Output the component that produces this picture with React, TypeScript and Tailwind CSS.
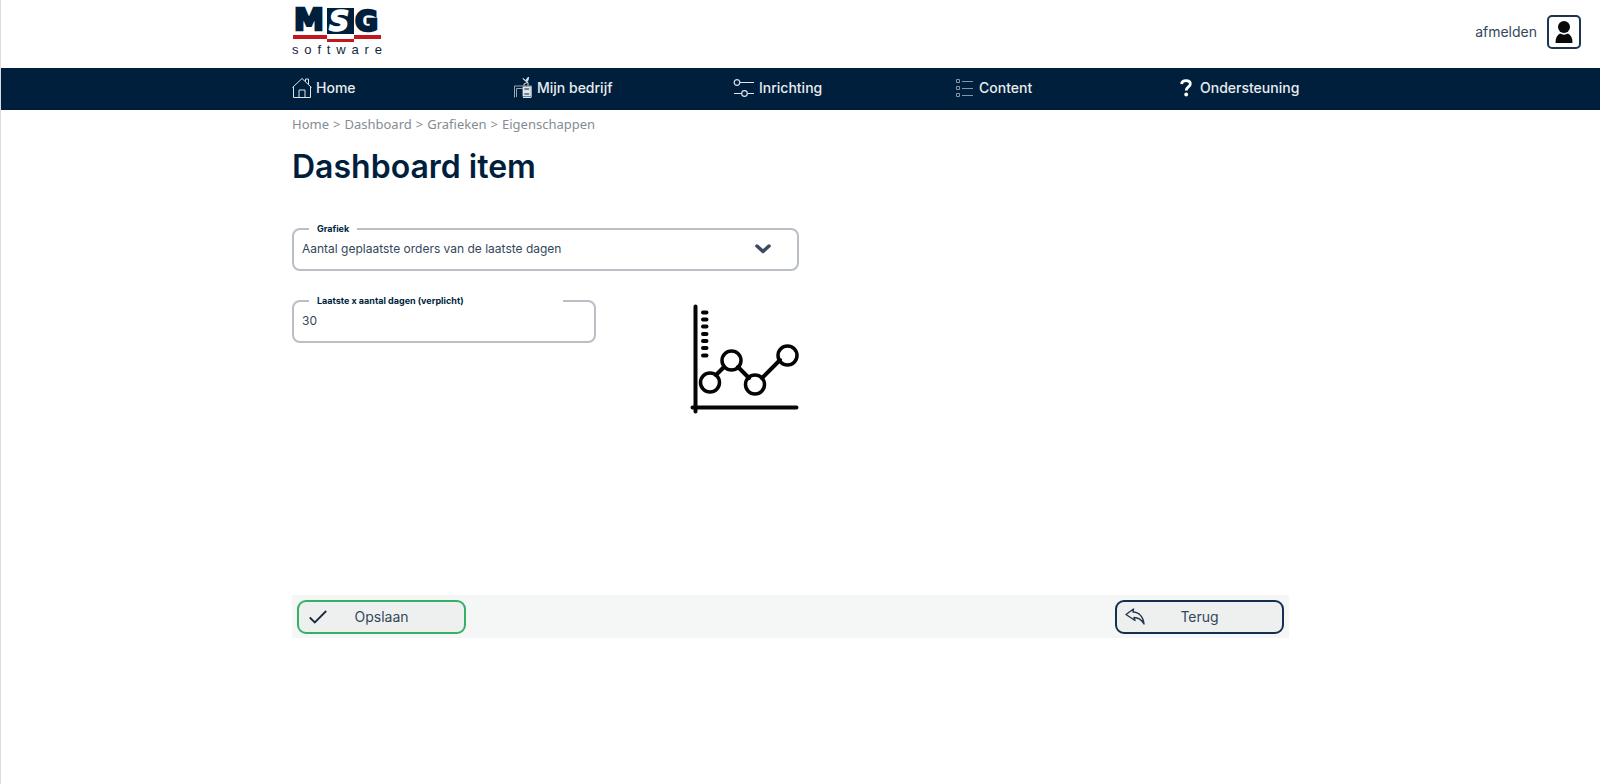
import { useState } from 'react';
import type { ReactNode } from 'react';

const NAV_ITEMS: Array<{ label: string; icon: ReactNode; gap: string }> = [
  { label: 'Home', icon: <HomeIcon />, gap: 'gap-1' },
  { label: 'Mijn bedrijf', icon: <DeskIcon />, gap: 'gap-1' },
  { label: 'Inrichting', icon: <SlidersIcon />, gap: 'gap-1' },
  { label: 'Content', icon: <ListIcon />, gap: 'gap-1.5' },
  { label: 'Ondersteuning', icon: <QuestionIcon />, gap: 'gap-2' },
];

const CRUMBS = ['Home', 'Dashboard', 'Grafieken', 'Eigenschappen'];

function Logo() {
  return (
    <span className="block w-[90px]">
      <svg width="90" height="44" viewBox="0 0 90 44" role="img" aria-label="MSG">
        <rect x="35" y="8" width="27" height="26" fill="#001f3d" />
        <g fontFamily="'DejaVu Sans', sans-serif" fontWeight="bold" fontSize="28" strokeWidth="2.500">
          <text x="2" y="30" fill="#001f3d" stroke="#001f3d" fontSize="30">M</text>
          <text x="37" y="31" fill="#fff" stroke="#fff" strokeWidth="1.500" fontStyle="italic">S</text>
          <text x="63" y="31" fill="#001f3d" stroke="#001f3d">G</text>
        </g>
        <path d="M1 35h34v4H1zM62 35h27v4H62zM35 39h27v3H35z" fill="#c4161c" />
      </svg>
      <span className="flex justify-between font-['Liberation_Sans',sans-serif] text-[13px] leading-3 font-medium text-[#12253c]">
        {Array.from('software').map((letter, i) => (
          <span key={i}>{letter}</span>
        ))}
      </span>
    </span>
  );
}

function HomeIcon() {
  return (
    <svg width="20" height="22" viewBox="0 0 20 22" fill="none" stroke="#dfe5ea" strokeWidth="1">
      <path d="M0.500 10.500 10 1.500l9.500 9M1.500 10v10.500h17V10M7 20.500v-7.500h6v7.500M13.500 4.500v-2.500h3v5" />
    </svg>
  );
}

function DeskIcon() {
  return (
    <svg width="20" height="22" viewBox="0 0 20 22" fill="none" stroke="#dfe5ea" strokeWidth="1">
      <path d="M1.500 20.500v-11.500h17v11.500M3.500 20v-8.500h6" stroke="#9aa7b4" />
      <path d="M11 8.500V7l3-1.500h1V8.500M14.500 5.500l-1-2M10 20.500h8" />
      <path d="M10 1.500l2.500 2 3-3.500-.5 3.500-2 1z" fill="#dfe5ea" />
      <path d="M10.500 10.500h6.500v3h-6.500zM10.500 15.500h6.500v3h-6.500z" strokeWidth="1.800" />
    </svg>
  );
}

function SlidersIcon() {
  return (
    <svg width="22" height="20" viewBox="0 0 22 20" fill="none" stroke="#dfe5ea" strokeWidth="1.200">
      <circle cx="4" cy="4.500" r="2.800" />
      <circle cx="11.500" cy="15.500" r="2.800" />
      <path d="M7 4.500h14M1 15.500h7.500M14.500 15.500H21" />
    </svg>
  );
}

function ListIcon() {
  return (
    <svg width="18" height="20" viewBox="0 0 18 20" fill="none" stroke="#8794a3" strokeWidth="1">
      <path d="M1.500 1.500h3v3h-3zM1.500 8.500h3v3h-3zM1.500 15.500h3v3h-3zM7 3.500h11M7 10.500h11M7 17.500h11" />
    </svg>
  );
}

function QuestionIcon() {
  return (
    <svg width="12" height="18" viewBox="0 0 12 18" fill="none" stroke="#fff" strokeWidth="2.800">
      <path d="M1.500 5C1.800 2.600 3.500 1.700 6 1.700c2.600 0 4.300 1.200 4.300 3.200 0 3-4.100 2.900-4.100 6.600" />
      <circle cx="6.200" cy="15.500" r="1.900" fill="#fff" stroke="none" />
    </svg>
  );
}

function UserIcon() {
  return (
    <svg width="18" height="24" viewBox="0 0 18 24" fill="#0a0a0a">
      <circle cx="9" cy="7" r="6" />
      <path d="M0.500 23c0-5 1.500-8 4.500-9.500 2.500 1.500 5.500 1.500 8 0 3 1.500 4.500 4.500 4.500 9.500z" />
    </svg>
  );
}

function LineChartIcon() {
  return (
    <svg width="110" height="110" viewBox="0 0 110 110" fill="none" stroke="#050505" strokeLinecap="round">
      <path d="M5.500 2.500v105M2.500 103.500h104" strokeWidth="4" />
      <path
        d="M13 8.500h3.500M13 15.500h3.500M13 22.500h3.500M13 30h3.500M13 37h3.500M13 44h3.500M13 51.500h3.500"
        strokeWidth="4"
      />
      <path d="M26 71l8-8M48 63l11 11M72 74l18-18" strokeWidth="4" />
      <g strokeWidth="3.500">
        <circle cx="20" cy="78.500" r="9.500" />
        <circle cx="41.500" cy="56.500" r="9.500" />
        <circle cx="65" cy="80.500" r="9.500" />
        <circle cx="97.500" cy="51.500" r="9.500" />
      </g>
    </svg>
  );
}

export default function App() {
  const [chart, setChart] = useState('orders');
  const [days, setDays] = useState('30');

  return (
    <div className="min-h-screen border-l border-[#dcdcdc] bg-white font-['Inter',sans-serif] text-[#34475a]">
      <header className="flex h-[68px] items-start justify-between pr-[19px] pl-[291px]">
        <a href="#home">
          <Logo />
        </a>
        <a href="#afmelden" className="mt-[15px] flex items-center gap-2.5 text-sm">
          afmelden
          <span className="flex size-[34px] items-center justify-center rounded-[5px] border-2 border-[#1c3450]">
            <UserIcon />
          </span>
        </a>
      </header>

      <nav className="h-[42px] bg-[#001f3d] pr-5">
        <ul className="mx-auto grid h-full max-w-[997px] grid-cols-[221px_220px_222px_225px_auto] items-center pb-0.5">
          {NAV_ITEMS.map((item) => (
            <li key={item.label}>
              <a
                href="#"
                className={`flex items-center text-sm font-medium whitespace-nowrap text-[#e8ecef] ${item.gap}`}
              >
                {item.icon}
                {item.label}
              </a>
            </li>
          ))}
        </ul>
      </nav>

      <div className="pr-5">
        <main className="mx-auto max-w-[997px]">
          <ol className="flex pt-[5px] font-['Noto_Sans',sans-serif] text-[13px] leading-[18px] text-[#858c93]">
            {CRUMBS.map((crumb, i) => (
              <li key={crumb}>
                {i > 0 && <span className="px-1">&gt;</span>}
                <a href="#">{crumb}</a>
              </li>
            ))}
          </ol>
          <h1 className="mt-3.5 text-[32px] leading-10 font-semibold text-[#001f3d]">Dashboard item</h1>

          <form>
            <fieldset className="mt-9 h-12 w-[507px] rounded-lg border-2 border-[#b9bfc4]">
              <legend className="ml-[15px] px-2 text-[9px] leading-3 font-bold text-[#001f3d]">
                <label htmlFor="grafiek">Grafiek</label>
              </legend>
              <div className="grid items-center">
                <select
                  id="grafiek"
                  value={chart}
                  onChange={(e) => setChart(e.target.value)}
                  className="col-start-1 row-start-1 h-7 appearance-none bg-transparent px-2 text-xs outline-none"
                >
                  <option value="orders">Aantal geplaatste orders van de laatste dagen</option>
                </select>
                <svg
                  className="pointer-events-none col-start-1 row-start-1 mr-[26px] justify-self-end"
                  width="16"
                  height="10"
                  viewBox="0 0 16 10"
                  fill="none"
                  stroke="#3c4c60"
                  strokeWidth="3.500"
                  strokeLinecap="round"
                  strokeLinejoin="round"
                >
                  <path d="m2 2 6 5.500L14 2" />
                </svg>
              </div>
            </fieldset>

            <div className="mt-6 flex h-[300px] items-start gap-[94px]">
              <fieldset className="h-12 w-[304px] rounded-lg border-2 border-[#b9bfc4]">
                <legend className="ml-[15px] w-[254px] px-2 text-[9px] leading-3 font-bold text-[#001f3d]">
                  <label htmlFor="dagen">Laatste x aantal dagen (verplicht)</label>
                </legend>
                <input
                  id="dagen"
                  value={days}
                  onChange={(e) => setDays(e.target.value)}
                  className="h-[26px] w-full bg-transparent px-2 text-xs outline-none"
                />
              </fieldset>
              <div className="mt-[9px]">
                <LineChartIcon />
              </div>
            </div>

            <div className="flex h-[43px] items-center justify-between bg-[#f5f6f6] px-[5px] text-sm">
              <button
                type="button"
                className="grid h-[34px] w-[169px] grid-cols-[18px_1fr_18px] items-center rounded-[9px] border-2 border-[#35b06a] bg-[#eef0f0] px-2.5"
              >
                <svg width="18" height="14" viewBox="0 0 18 14" fill="none" stroke="#1b2b3c" strokeWidth="1.800">
                  <path d="m0.800 7.500 5 5L17.200 1" />
                </svg>
                Opslaan
              </button>
              <button
                type="button"
                className="grid h-[34px] w-[169px] grid-cols-[18px_1fr_18px] items-center rounded-[9px] border-2 border-[#14304e] bg-[#eef0f0] px-2"
              >
                <svg width="20" height="17" viewBox="0 0 20 17" fill="none" stroke="#25374a" strokeWidth="1.400" strokeLinejoin="round">
                  <path d="M1 6.500 8.500 1l-.5 3c6 0 10.500 5 11 12-2.500-4.500-6-6.500-10-6.500l1 3z" />
                </svg>
                Terug
              </button>
            </div>
          </form>
        </main>
      </div>
    </div>
  );
}
